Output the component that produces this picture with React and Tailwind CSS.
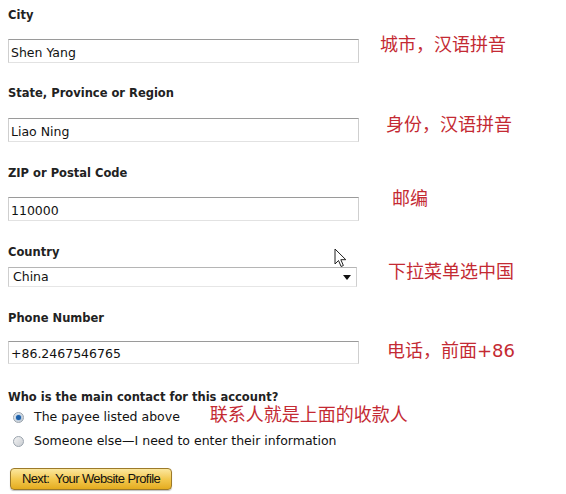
import React from 'react'

const labelCls = 'h-4 leading-4 text-[11.5px] font-bold text-[#222]'
const noteCls = 'text-[18px] leading-none text-[#c42a33] whitespace-nowrap'

const TextBox = ({ value, h = 'h-6' }) => (
     <div className={`${h} w-[351px] shrink-0 flex items-center pl-[2px] pt-1 bg-white border border-[#cfcfcf] border-t-[#9a9a9a] border-b-[#e2e2e2] text-[12.5px] text-[#111]`}>
          {value}
     </div>
)

const Radio = ({ checked }) => (
     <span className="w-[11px] h-[11px] shrink-0 rounded-full border border-[#9aa3ad] bg-gradient-to-br from-[#f4f4f4] to-[#c9cdd2] flex items-center justify-center">
          {checked && <span className="w-[5px] h-[5px] rounded-full bg-[#1d5fa8] shadow-[0_0_2px_#3d8fe0]" />}
     </span>
)

export default function App() {
     return (
          <div
               className="relative w-[566px] h-[494px] bg-white overflow-hidden pl-2 pt-[7px]"
               style={{ fontFamily: '"DejaVu Sans", Verdana, "Noto Sans CJK SC", sans-serif' }}
          >
               {/* City */}
               <div className={labelCls}>City</div>
               <div className="mt-4 h-6 flex items-center">
                    <TextBox value="Shen Yang" />
                    <span className={`${noteCls} ml-[21px] mb-[12px]`}>城市，汉语拼音</span>
               </div>

               {/* State */}
               <div className={`${labelCls} mt-[22px]`}>State, Province or Region</div>
               <div className="mt-[17px] h-6 flex items-center">
                    <TextBox value="Liao Ning" />
                    <span className={`${noteCls} ml-[27px] mb-[10px]`}>身份，汉语拼音</span>
               </div>

               {/* ZIP */}
               <div className={`${labelCls} mt-[23px]`}>ZIP or Postal Code</div>
               <div className="mt-4 h-6 flex items-center">
                    <TextBox value="110000" />
                    <span className={`${noteCls} ml-[33px] mb-[20px]`}>邮编</span>
               </div>

               {/* Country */}
               <div className={`${labelCls} mt-[23px]`}>Country</div>
               <div className="mt-[7px] h-5 flex items-center">
                    <div className="h-5 w-[349px] shrink-0 flex items-center justify-between pl-[4px] pr-[5px] pt-px bg-white border border-[#cfcfcf] border-t-[#b5b5b5] border-b-[#e6e6e6] text-[12.5px] text-[#111]">
                         <span>China</span>
                         <svg width="8" height="5" viewBox="0 0 8 5"><path d="M0 0h8L4 5z" fill="#111" /></svg>
                    </div>
                    <span className={`${noteCls} ml-[31px] mb-[10px]`}>下拉菜单选中国</span>
               </div>

               {/* Phone */}
               <div className={`${labelCls} mt-[23px]`}>Phone Number</div>
               <div className="mt-[15px] h-[23px] flex items-center">
                    <TextBox value="+86.2467546765" h="h-[23px]" />
                    <span className={`${noteCls} ml-[28px] mb-[3px]`}>电话，前面+86</span>
               </div>

               {/* Contact */}
               <div className={`${labelCls} mt-[25px]`}>Who is the main contact for this account?</div>
               <div className="mt-px h-[22px] flex items-center pl-[5px] text-[12.5px] text-[#111]">
                    <Radio checked />
                    <span className="ml-[10px]">The payee listed above</span>
                    <span className={`${noteCls} ml-[30px] mb-[4px]`}>联系人就是上面的收款人</span>
               </div>
               <div className="mt-[2px] h-[22px] flex items-center pl-[5px] text-[12.5px] text-[#111]">
                    <Radio />
                    <span className="ml-[10px]">Someone else—I need to enter their information</span>
               </div>

               <div className="mt-4 ml-[2px] w-[162px] h-[22px] rounded-[4px] border border-[#9c7a2a] bg-gradient-to-b from-[#fbe79c] via-[#f3c94e] to-[#e4ac1c] shadow-[0_1px_1px_rgba(0,0,0,0.25)] flex items-center justify-center">
                    <span className="text-[13px] text-[#111] tracking-[-0.6px]" style={{ fontFamily: '"Liberation Sans", Arial, sans-serif' }}>
                         Next:&nbsp; Your Website Profile
                    </span>
               </div>

               {/* mouse cursor */}
               <svg className="absolute left-[334px] top-[248px]" width="13" height="20" viewBox="0 0 13 20">
                    <path d="M1 1v15l3.5-3.5 2.6 6 2.3-1-2.6-5.8h5z" fill="#fff" stroke="#222" strokeWidth="1" strokeLinejoin="round" />
               </svg>
          </div>
     )
}
